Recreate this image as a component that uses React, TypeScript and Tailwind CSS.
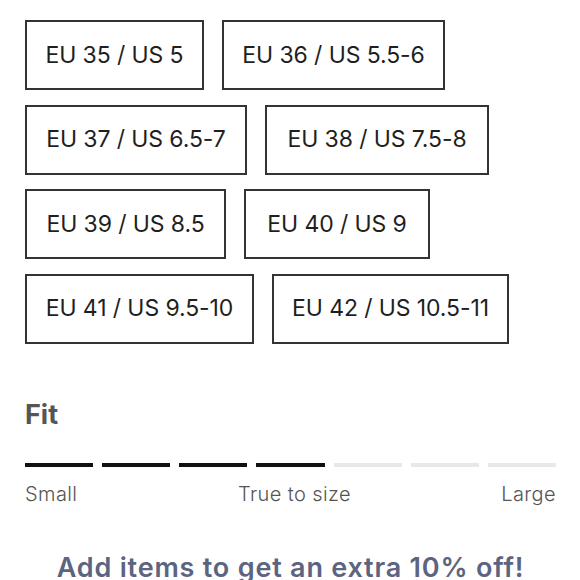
import React from "react";

const rows: { label: string; w: string }[][] = [
  [
    { label: "EU 35 / US 5", w: "w-[179px]" },
    { label: "EU 36 / US 5.5-6", w: "w-[223px]" },
  ],
  [
    { label: "EU 37 / US 6.5-7", w: "w-[222px]" },
    { label: "EU 38 / US 7.5-8", w: "w-[224px]" },
  ],
  [
    { label: "EU 39 / US 8.5", w: "w-[201px]" },
    { label: "EU 40 / US 9", w: "w-[186px]" },
  ],
  [
    { label: "EU 41 / US 9.5-10", w: "w-[229px]" },
    { label: "EU 42 / US 10.5-11", w: "w-[237px]" },
  ],
];

const segs = [true, true, true, true, false, false, false];

export default function App() {
  return (
    <div
      className="w-[580px] h-[580px] overflow-hidden bg-white pl-[25px] pr-[24px] pt-[20px]"
      style={{ fontFamily: '"Inter", "Open Sans", sans-serif' }}
    >
      <div className="flex flex-col gap-[14.5px]">
        {rows.map((r, i) => (
          <div key={i} className="flex gap-[18px]">
            {r.map((b) => (
              <div
                key={b.label}
                className={`${b.w} h-[70px] border-2 border-[#333333] flex items-center justify-center text-[23px] text-[#1f1f1f] tracking-[-0.1px]`}
              >
                {b.label}
              </div>
            ))}
          </div>
        ))}
      </div>
      <div className="mt-[55px] text-[27px] font-bold text-[#555555] leading-[32px]">Fit</div>
      <div className="mt-[32px] flex gap-[9px]">
        {segs.map((on, i) => (
          <div key={i} className={`flex-1 h-[4px] ${on ? "bg-[#111111]" : "bg-[#e8e8e8]"}`} />
        ))}
      </div>
      <div className="mt-[15px] grid grid-cols-3 text-[20px] font-light text-[#555555] leading-[24px] tracking-[0.4px]">
        <span>Small</span>
        <span className="text-center whitespace-nowrap ml-[8px]">True to size</span>
        <span className="text-right">Large</span>
      </div>
      <div className="mt-[46px] text-center text-[27px] font-semibold text-[#5b6480] leading-[32px] tracking-[0.8px] whitespace-nowrap">
        Add items to get an extra 10% off!
      </div>
    </div>
  );
}
